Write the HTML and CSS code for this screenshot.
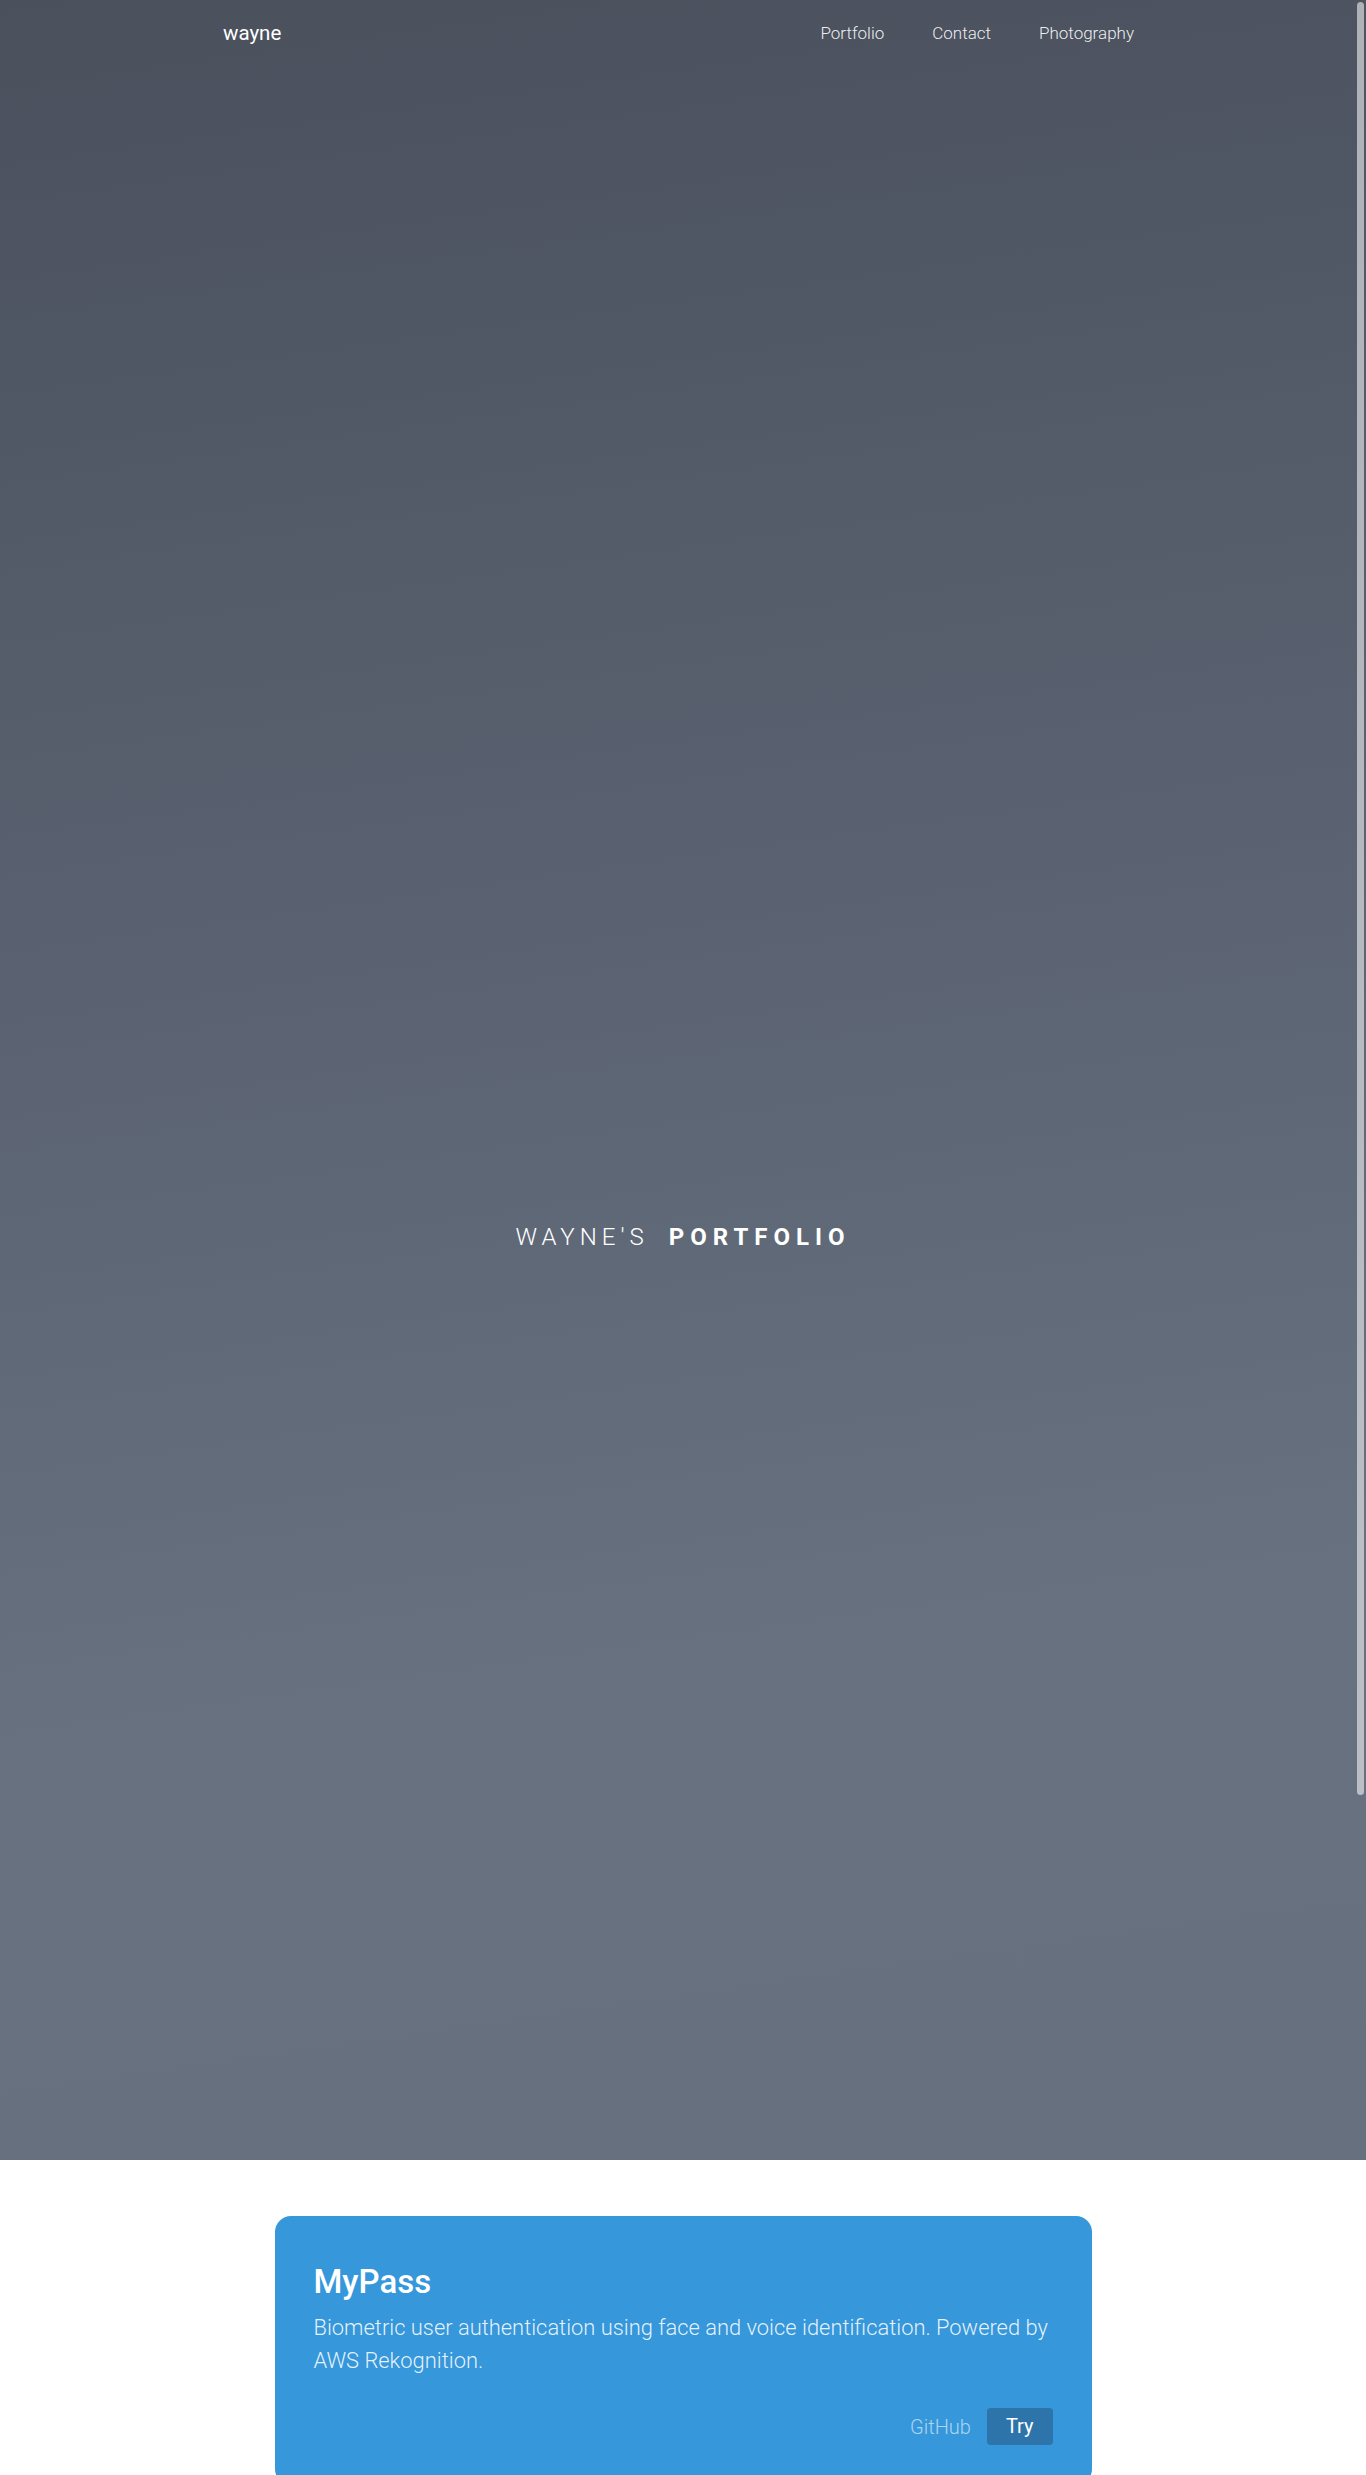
FILE: index.html
```html
<!DOCTYPE html>
<html lang="en">
<head>
<meta charset="utf-8">
<title>Wayne's Portfolio</title>
<link rel="stylesheet" href="styles.css">
</head>
<body>
<header class="hero">
  <nav class="nav">
    <a class="brand" href="#">wayne</a>
    <ul class="nav-links">
      <li><a href="#portfolio">Portfolio</a></li>
      <li><a href="#contact">Contact</a></li>
      <li><a href="#photography">Photography</a></li>
    </ul>
  </nav>
  <h1 class="hero-title"><span class="thin">WAYNE'S</span><span class="bold">PORTFOLIO</span></h1>
</header>
<main class="projects" id="portfolio">
  <article class="card">
    <h2 class="card-title">MyPass</h2>
    <p class="card-desc">Biometric user authentication using face and voice identification. Powered by AWS Rekognition.</p>
    <div class="card-actions">
      <a class="link" href="#">GitHub</a>
      <a class="btn" href="#">Try</a>
    </div>
  </article>
</main>
<div class="scroll-thumb"></div>
</body>
</html>
```

FILE: styles.css
```css
html {
  scrollbar-width: none;
}
html::-webkit-scrollbar {
  width: 0;
  height: 0;
}
* {
  box-sizing: border-box;
}
body {
  margin: 0;
  font-family: Roboto, "Liberation Sans", sans-serif;
  background: #ffffff;
  color: #ffffff;
}
a {
  color: inherit;
  text-decoration: none;
}
.hero {
  height: 2160px;
  background: linear-gradient(172deg, #4a505c 0%, #5a6271 42%, #67717f 75%, #66707f 100%);
  display: flex;
  flex-direction: column;
}
.nav {
  display: flex;
  align-items: center;
  justify-content: space-between;
  height: 66px;
  padding: 0 232px 0 223px;
}
.brand {
  font-size: 20.5px;
  font-weight: 400;
  color: #ffffff;
}
.nav-links {
  display: flex;
  list-style: none;
  margin: 0;
  padding: 0;
  gap: 48px;
}
.nav-links a {
  font-size: 17px;
  font-weight: 300;
  color: rgba(255, 255, 255, 0.92);
}
.hero-title {
  margin: 1156px 0 0;
  text-align: center;
  font-size: 24px;
  line-height: 30px;
  font-weight: 400;
}
.thin {
  font-weight: 300;
  letter-spacing: 5px;
}
.bold {
  font-weight: 700;
  letter-spacing: 6px;
  margin-left: 20px;
}
.projects {
  padding: 56px 0 80px;
  display: flex;
  flex-direction: column;
  align-items: center;
}
.card {
  width: 817px;
  background: #3697db;
  border-radius: 16px;
  padding: 46px 39px 40px 39px;
}
.card-title {
  margin: 0;
  font-size: 33px;
  line-height: 40px;
  font-weight: 500;
}
.card-desc {
  margin: 9px 0 0;
  font-size: 21.9px;
  line-height: 33px;
  font-weight: 300;
  color: rgba(255, 255, 255, 0.88);
}
.card-actions {
  display: flex;
  justify-content: flex-end;
  align-items: center;
  gap: 16px;
  margin-top: 31px;
}
.link {
  font-size: 20px;
  font-weight: 300;
  color: rgba(255, 255, 255, 0.6);
}
.btn {
  background: #2c74a9;
  border-radius: 4px;
  font-size: 20px;
  font-weight: 400;
  height: 37px;
  line-height: 37px;
  padding: 0 19px;
  color: #ffffff;
}
.scroll-thumb {
  position: fixed;
  top: 2px;
  right: 2px;
  width: 7px;
  height: 1793px;
  border-radius: 4px;
  background: rgba(255, 255, 255, 0.55);
}
```
